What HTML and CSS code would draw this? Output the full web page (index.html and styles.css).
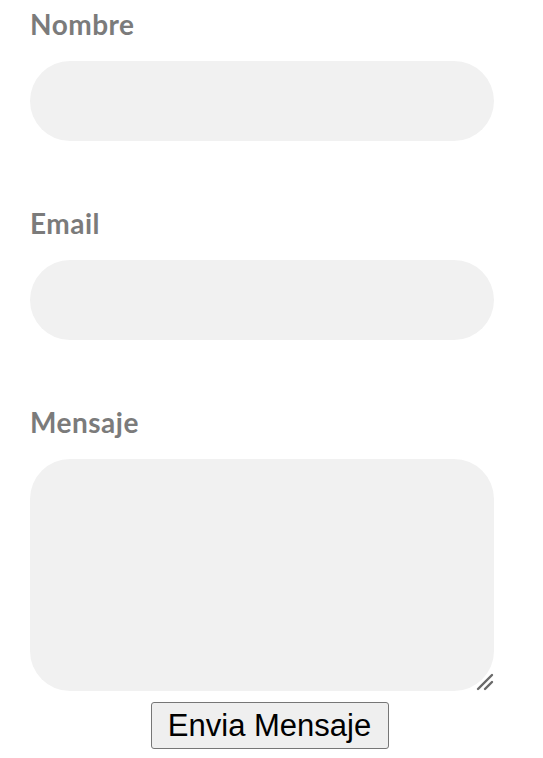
FILE: index.html
```html
<!DOCTYPE html>
<html lang="es">
<head>
<meta charset="utf-8">
<title>Contacto</title>
<link rel="stylesheet" href="styles.css">
</head>
<body>
<form class="form">
  <div class="field">
    <label class="label" for="nombre">Nombre</label>
    <input class="input" id="nombre" type="text">
  </div>
  <div class="field">
    <label class="label" for="email">Email</label>
    <input class="input" id="email" type="email">
  </div>
  <div class="field field-last">
    <label class="label" for="mensaje">Mensaje</label>
    <div class="area-wrap">
      <textarea class="area" id="mensaje"></textarea>
      <svg class="grip" width="20" height="20" viewBox="0 0 20 20">
        <line x1="3" y1="18" x2="17" y2="4" stroke="#6a6a6a" stroke-width="2.4" stroke-linecap="round"/>
        <line x1="10" y1="18" x2="17" y2="11" stroke="#6a6a6a" stroke-width="2.4" stroke-linecap="round"/>
      </svg>
    </div>
  </div>
  <div class="actions">
    <button class="btn" type="submit">Envia Mensaje</button>
  </div>
</form>
</body>
</html>
```
FILE: styles.css
```css
* { box-sizing: border-box; }
html, body { margin: 0; padding: 0; background: #fff; }
body { width: 543px; height: 758px; overflow: hidden; }
.form {
  display: flex;
  flex-direction: column;
  padding: 6px 49px 0 30px;
}
.field {
  display: flex;
  flex-direction: column;
  margin-bottom: 64px;
}
.field-last { margin-bottom: 0; }
.label {
  font-family: "Lato", "Open Sans", sans-serif;
  font-weight: 700;
  font-size: 28px;
  letter-spacing: 0.5px;
  line-height: 36px;
  color: #7b7b7b;
  margin-bottom: 19px;
}
.input {
  display: block;
  width: 464px;
  height: 80px;
  border: none;
  border-radius: 40px;
  background: #f1f1f1;
  outline: none;
}
.area-wrap { position: relative; width: 464px; }
.area {
  display: block;
  width: 464px;
  height: 232px;
  border: none;
  border-radius: 40px;
  background: #f1f1f1;
  resize: none;
  outline: none;
}
.grip {
  position: absolute;
  right: -1px;
  bottom: 0px;
}
.actions {
  display: flex;
  justify-content: center;
  padding-top: 11px;
  margin-left: -30px;
  margin-right: -45px;
}
.btn {
  font-family: "Liberation Sans", Arial, sans-serif;
  font-size: 31px;
  color: #000;
  background: #efefef;
  border: 1.5px solid #767676;
  border-radius: 3px;
  width: 238px;
  height: 47px;
  padding: 0;
  line-height: 1;
}
```
